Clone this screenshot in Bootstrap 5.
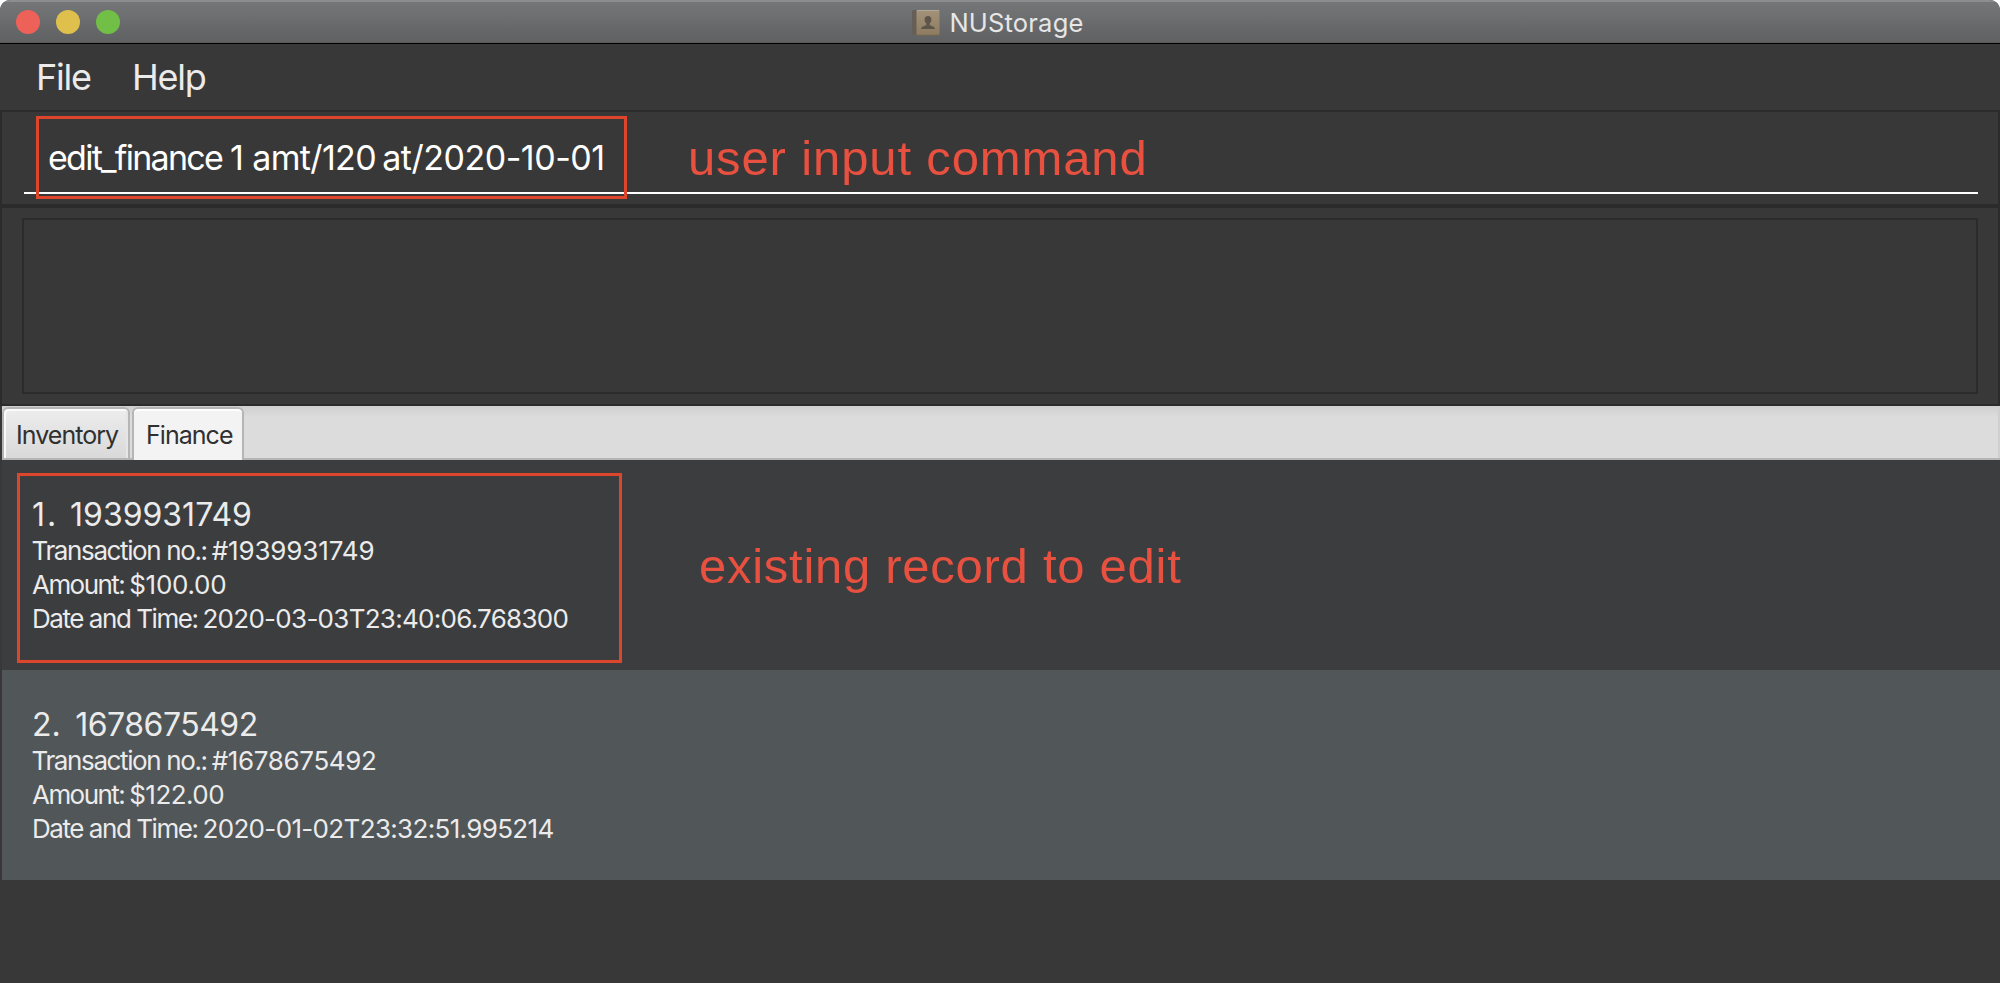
<!DOCTYPE html>
<html lang="en">
<head>
<meta charset="utf-8">
<title>NUStorage</title>
<link rel="stylesheet" href="https://cdn.jsdelivr.net/npm/bootstrap@5.3.0/dist/css/bootstrap.min.css">
<style>
  body { background: #fff; font-family: Inter, "Liberation Sans", sans-serif; color: #ebebeb; }
  .app-window { height: 983px; background: #383838; border-radius: 10px 10px 0 0; overflow: hidden; white-space: nowrap; }

  /* title bar */
  .title-bar { height: 44px; padding-right: 4px; background: linear-gradient(#757678, #5f6061); border-top: 2px solid #8c8d8f; border-bottom: 1px solid #000; box-shadow: inset 0 -1px #5a5a5a; }
  .light { width: 24px; height: 24px; border-radius: 50%; }
  .light-close { background: #ee6158; }
  .light-min { background: #e0c04c; }
  .light-zoom { background: #71bf46; }
  .lights { left: 16px; top: 8px; gap: 16px; }
  .title-bar .caption { font-size: 25.5px; letter-spacing: .19px; line-height: 36px; color: #e6e6e7; padding-top: 3px; margin-left: 9px; }

  /* menu bar */
  .menu-bar { height: 66px; padding-left: 36px; font-size: 36px; line-height: 66px; }
  .menu-bar span { letter-spacing: -1.2px; }
  .menu-bar span + span { margin-left: 41px; }

  /* command and result panes */
  .pane { border: 2px solid #2b2b2b; }
  .command-pane { height: 96px; padding: 0 20px 0 22px; }
  .command-field { height: 82px; border-bottom: 2px solid #fff; padding: 11px 0 0 24px; font-size: 34px; line-height: 69px; color: #fff; }
  .word-cmd { letter-spacing: -1.73px; margin-right: 8px; }
  .word-index { margin-right: 8.3px; }
  .word-amt { letter-spacing: -.64px; margin-right: 6.2px; }
  .word-date { letter-spacing: -.48px; }
  .result-pane { height: 200px; padding: 10px 20px; }
  .result-box { height: 176px; border: 2px solid #2b2b2b; }

  /* tabs */
  .tab-strip { height: 54px; margin-left: 2px; padding-top: 1px; background: linear-gradient(#cfcfcf, #dcdcdc 11px); border-bottom: 2px solid #b5b5b5; box-shadow: inset -2px 0 #cfcfcf; }
  .app-tab { border: 2px solid #b5b5b5; border-bottom: 0; border-radius: 6px 6px 0 0; color: #303030; font-size: 25px; line-height: 50px; padding-top: 1px; letter-spacing: -.96px; }
  .tab-inventory { width: 128px; height: 51px; padding-left: 12px; background: linear-gradient(#ededed, #d9d9d9); box-shadow: inset 2px 2px #fafafa, inset -2px 0 #e6e6e6; }
  .tab-finance { width: 112px; height: 53px; margin-left: 2px; padding-left: 12px; background: #f3f3f3; box-shadow: inset 0 2px #fff; }

  /* records */
  .record { height: 210px; margin-left: 2px; padding: 36px 0 0 30px; background: #3c3d3f; }
  .record-alt { background: #515658; }
  .record-title { font-size: 32px; line-height: 38px; }
  .record-title.first { gap: 11.8px; }
  .record-title.second { gap: 14.3px; }
  .id-one { letter-spacing: 2px; }
  .id-two { letter-spacing: .1px; }
  .num-two { letter-spacing: -.5px; }
  .detail { font-size: 26px; line-height: 34px; gap: 5px; }
  .k-trans { letter-spacing: -1.38px; margin-left: -.5px; }
  .k-amount { letter-spacing: -1.55px; }
  .k-date { letter-spacing: -1.45px; }
  .v-ref { letter-spacing: -.13px; }
  .record-alt .v-ref { letter-spacing: -.35px; }
  .v-amount { letter-spacing: -.27px; }
  .record-alt .v-amount { letter-spacing: -.53px; }
  .v-date { letter-spacing: -.72px; }
  .record-alt .v-date { letter-spacing: -.66px; }

  /* annotations laid over the window */
  .callout-box { border: 3px solid #dd462c; }
  .callout-command { left: 36px; top: 116px; width: 591px; height: 83px; }
  .callout-record { left: 17px; top: 473px; width: 605px; height: 190px; }
  .callout-text { font: 49px/60px "Liberation Sans", sans-serif; color: #e85040; }
  .note-command { left: 688px; top: 128px; letter-spacing: .87px; }
  .note-record { left: 699px; top: 536px; letter-spacing: .73px; }
</style>
<script src="https://cdn.jsdelivr.net/npm/bootstrap@5.3.0/dist/js/bootstrap.bundle.min.js"></script>
</head>
<body>
<main class="app-window position-relative">
  <header class="title-bar position-relative d-flex justify-content-center">
    <div class="lights position-absolute d-flex">
      <span class="light light-close"></span><span class="light light-min"></span><span class="light light-zoom"></span>
    </div>
    <svg class="mt-2" width="28" height="27" viewBox="0 0 28 27" aria-hidden="true">
      <defs><linearGradient id="cover" x1="0" y1="0" x2="0" y2="1"><stop offset="0" stop-color="#a3927a"/><stop offset="1" stop-color="#8d7c60"/></linearGradient></defs>
      <rect x="0" y="0" width="6" height="25" rx="1.5" fill="#665f57"/>
      <rect x="4.500" y="0" width="23" height="25" rx="1" fill="url(#cover)"/>
      <path d="M5 .5H27" stroke="#b3a795"/>
      <path d="M5 25.300H27" stroke="#70644f"/>
      <path d="M16 6c-2.300 0-3.500 1.600-3.400 3.800.1 1.800.8 3 1.700 3.800v1.300c-1.400 1-4.700 1.200-5.200 3.600V19h13.800v-.5c-.5-2.400-3.800-2.600-5.200-3.600v-1.300c.9-.8 1.600-2 1.700-3.800C19.500 7.600 18.300 6 16 6z" fill="#5d5549"/>
    </svg>
    <span class="caption">NUStorage</span>
  </header>

  <nav class="menu-bar d-flex"><span>File</span><span>Help</span></nav>

  <section class="pane command-pane">
    <div class="command-field d-flex"><span class="word-cmd">edit_finance</span><span class="word-index">1</span><span class="word-amt">amt/120</span><span class="word-date">at/2020-10-01</span></div>
  </section>
  <section class="pane result-pane"><div class="result-box"></div></section>

  <div class="tab-strip d-flex">
    <div class="app-tab tab-inventory">Inventory</div>
    <div class="app-tab tab-finance">Finance</div>
  </div>

  <article class="record">
    <div class="record-title first d-flex"><span class="id-one">1.</span><span>1939931749</span></div>
    <div class="detail d-flex"><span class="k-trans">Transaction no.:</span><span class="v-ref">#1939931749</span></div>
    <div class="detail d-flex"><span class="k-amount">Amount:</span><span class="v-amount">$100.00</span></div>
    <div class="detail d-flex"><span class="k-date">Date and Time:</span><span class="v-date">2020-03-03T23:40:06.768300</span></div>
  </article>
  <article class="record record-alt">
    <div class="record-title second d-flex"><span class="id-two">2.</span><span class="num-two">1678675492</span></div>
    <div class="detail d-flex"><span class="k-trans">Transaction no.:</span><span class="v-ref">#1678675492</span></div>
    <div class="detail d-flex"><span class="k-amount">Amount:</span><span class="v-amount">$122.00</span></div>
    <div class="detail d-flex"><span class="k-date">Date and Time:</span><span class="v-date">2020-01-02T23:32:51.995214</span></div>
  </article>

  <div class="callout-box callout-command position-absolute"></div>
  <div class="callout-text note-command position-absolute">user input command</div>
  <div class="callout-box callout-record position-absolute"></div>
  <div class="callout-text note-record position-absolute">existing record to edit</div>
</main>
</body>
</html>
